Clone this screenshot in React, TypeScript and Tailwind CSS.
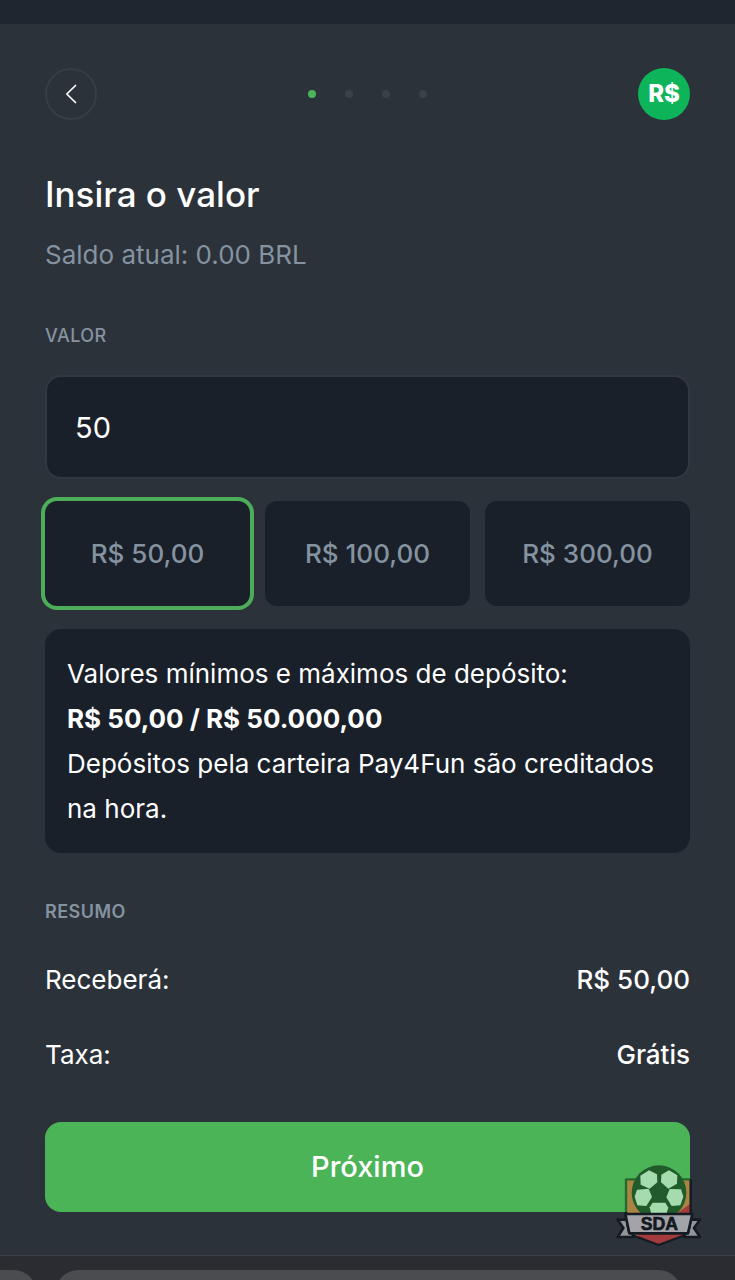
import { useState } from "react";
import { clsx } from "clsx";

const amounts = [
  { value: "50", label: "R$ 50,00" },
  { value: "100", label: "R$ 100,00" },
  { value: "300", label: "R$ 300,00" },
];

const steps = [1, 2, 3, 4];

function ClubBadge() {
  return (
    <svg
      viewBox="48 30 258 246"
      aria-hidden="true"
      className="pointer-events-none absolute -right-3 top-[43px] h-[82px] w-[86px]"
    >
      {/* shield */}
      <path d="M78 73H273V222Q268 238 240 246L176 270L112 246Q82 236 78 222Z" fill="#a98443" />
      <path d="M273 145V222Q268 238 240 246L176 270L112 246L118 232L236 172Z" fill="#a33a3c" />
      <path d="M78 171V73H270" fill="none" stroke="#236b31" strokeWidth="7" strokeLinejoin="round" />
      <path d="M272 73V222Q268 238 240 246L176 270L112 246Q82 236 79 222V171" fill="none" stroke="#151b22" strokeWidth="7" strokeLinejoin="round" />
      {/* ball */}
      <circle cx="177" cy="113" r="82" fill="#225b2b" />
      <path d="M147 46L171 58L172 82L149 101L122 89L121 62Z" fill="#a5dbad" />
      <path d="M207 46L232 61L231 86L205 101L183 82L184 59Z" fill="#a5dbad" />
      <path d="M111 104L146 101L156 126L139 153L112 151L104 125Z" fill="#a5dbad" />
      <path d="M209 102L243 103L250 125L241 151L215 153L199 127Z" fill="#a5dbad" />
      <path d="M158 143H196L205 158L199 178H154L149 157Z" fill="#a5dbad" />
      {/* ribbon */}
      <path d="M80 194H53L70 219L53 246H101L96 234H88Z" fill="#929599" stroke="#151b22" strokeWidth="8" strokeLinejoin="round" />
      <path d="M272 194H300L282 219L300 246H252L257 234H264Z" fill="#929599" stroke="#151b22" strokeWidth="8" strokeLinejoin="round" />
      <path d="M76 177H277L264 235H88Z" fill="#a2a4a9" stroke="#151b22" strokeWidth="8" strokeLinejoin="round" />
      <text
        x="178"
        y="225"
        textAnchor="middle"
        fill="#14181f"
        stroke="#14181f"
        strokeWidth="2"
        fontSize="53"
        fontWeight="700"
        fontFamily="'Liberation Sans', sans-serif"
      >
        SDA
      </text>
    </svg>
  );
}

export default function App() {
  const [amount, setAmount] = useState("50");

  return (
    <div className="flex min-h-screen flex-col bg-[#2c323a] font-[Inter,'Liberation_Sans',sans-serif] text-white">
      <div className="h-6 shrink-0 bg-[#1f2630]" />

      <main className="flex flex-1 flex-col px-[45px] pt-11">
        <header className="flex items-center justify-between">
          <button
            type="button"
            aria-label="Voltar"
            className="flex size-[52px] items-center justify-center rounded-full border-2 border-[#373d45]"
          >
            <svg viewBox="0 0 12 20" fill="none" stroke="currentColor" strokeWidth="1.7" strokeLinecap="round" strokeLinejoin="round" className="h-5 w-3">
              <path d="M10.5 1.5L1.8 10L10.5 18.5" />
            </svg>
          </button>

          <div className="flex gap-[29px]">
            {steps.map((step) => (
              <span
                key={step}
                className={clsx("size-2 rounded-full", step === 1 ? "bg-[#4bb457]" : "bg-[#3a4149]")}
              />
            ))}
          </div>

          <div className="flex size-[52px] items-center justify-center rounded-full bg-[#0db45a] text-2xl font-extrabold">
            R$
          </div>
        </header>

        <h1 className="mt-[52px] text-[35px] font-medium leading-[45px]">Insira o valor</h1>
        <p className="mt-[15px] text-[26px] leading-[45px] text-[#8593a0]">Saldo atual: 0.00 BRL</p>

        <label htmlFor="amount" className="mt-11 text-lg font-medium leading-[30px] tracking-wide text-[#8593a0]">
          VALOR
        </label>
        <input
          id="amount"
          inputMode="decimal"
          value={amount}
          onChange={(e) => setAmount(e.target.value)}
          className="mt-6 h-[104px] w-full rounded-2xl border-2 border-[#323841] bg-[#1a2029] px-7 text-[29px] outline-none"
        />

        <div className="mt-[22px] grid grid-cols-3 gap-[15px]">
          {amounts.map(({ value, label }) => (
            <button
              key={value}
              type="button"
              aria-pressed={amount === value}
              onClick={() => setAmount(value)}
              className={clsx(
                "h-[105px] rounded-xl bg-[#1a2029] text-[26px] font-medium text-[#8593a0]",
                amount === value && "ring-4 ring-[#4dae5a]"
              )}
            >
              {label}
            </button>
          ))}
        </div>

        <div className="mt-[23px] rounded-2xl bg-[#1a2029] p-[22px] text-[26px] leading-[45px]">
          <p>Valores mínimos e máximos de depósito:</p>
          <p className="font-bold">R$ 50,00 / R$ 50.000,00</p>
          <p>Depósitos pela carteira Pay4Fun são creditados na hora.</p>
        </div>

        <h2 className="mt-11 text-lg font-semibold leading-[30px] tracking-wide text-[#8593a0]">RESUMO</h2>
        <dl className="mt-[30px] flex flex-col gap-[30px] text-[26px] leading-[45px]">
          <div className="flex justify-between">
            <dt>Receberá:</dt>
            <dd className="font-medium">R$ 50,00</dd>
          </div>
          <div className="flex justify-between">
            <dt>Taxa:</dt>
            <dd className="font-medium">Grátis</dd>
          </div>
        </dl>

        <div className="relative mb-[43px] mt-[45px]">
          <button type="button" className="h-[90px] w-full rounded-2xl bg-[#4bb457] text-[29px] font-medium">
            Próximo
          </button>
          <ClubBadge />
        </div>
      </main>

      {/* Browser bar, cut off by the bottom edge */}
      <div className="flex h-[25px] shrink-0 gap-5 overflow-hidden border-t border-[#3d3e46] bg-[#2a2c32] pt-3.5">
        <div className="h-16 w-9 shrink-0 rounded-tr-[22px] bg-[#4a4c50]" />
        <div className="mr-[54px] h-16 flex-1 rounded-t-[22px] bg-[#4a4c50]" />
      </div>
    </div>
  );
}
